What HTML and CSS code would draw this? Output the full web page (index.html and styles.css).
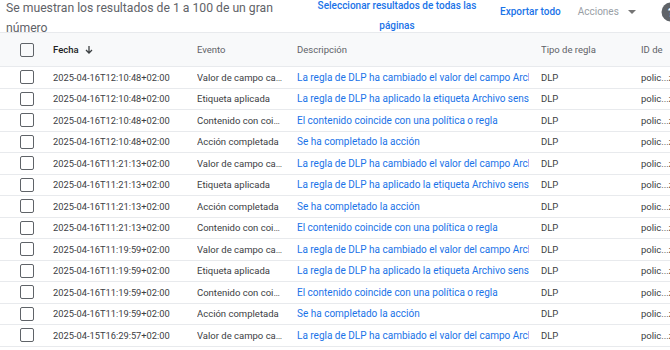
FILE: index.html
```html
<!DOCTYPE html>
<html lang="es">
<head>
<meta charset="utf-8">
<link rel="stylesheet" href="styles.css">
</head>
<body>
<div class="toolbar">
  <div class="summary">Se muestran los resultados de 1 a 100 de un gran número</div>
  <a class="select-all">Seleccionar resultados de todas las páginas</a>
  <a class="export">Exportar todo</a>
  <div class="actions">Acciones <span class="caret"></span></div>
  <div class="help"><svg width="20" height="20" viewBox="0 0 20 20"><circle cx="10" cy="10" r="9.5" fill="#5f6368"/><text x="10" y="14.5" text-anchor="middle" font-family="Roboto, sans-serif" font-size="12.5" font-weight="700" fill="#fff">?</text></svg></div>
</div>
<div class="table">
  <div class="row head">
    <div class="cb-cell"><span class="cb"></span></div>
    <div class="cell sort"><span>Fecha</span><svg class="arrow" width="10" height="10" viewBox="0 0 10 10"><path d="M5 1v7M2 5l3 3 3-3" stroke="#3c4043" stroke-width="1.3" fill="none"/></svg></div>
    <div class="cell"><span>Evento</span></div>
    <div class="cell"><span>Descripción</span></div>
    <div class="cell"><span>Tipo de regla</span></div>
    <div class="cell"><span>ID de</span></div>
  </div>
  <div id="rows"></div>
</div>
<script>
var data = [
 ["2025-04-16T12:10:48+02:00","Valor de campo cambiado","La regla de DLP ha cambiado el valor del campo Archivo"],
 ["2025-04-16T12:10:48+02:00","Etiqueta aplicada","La regla de DLP ha aplicado la etiqueta Archivo sensible"],
 ["2025-04-16T12:10:48+02:00","Contenido con coincidencias","El contenido coincide con una política o regla"],
 ["2025-04-16T12:10:48+02:00","Acción completada","Se ha completado la acción"],
 ["2025-04-16T11:21:13+02:00","Valor de campo cambiado","La regla de DLP ha cambiado el valor del campo Archivo"],
 ["2025-04-16T11:21:13+02:00","Etiqueta aplicada","La regla de DLP ha aplicado la etiqueta Archivo sensible"],
 ["2025-04-16T11:21:13+02:00","Acción completada","Se ha completado la acción"],
 ["2025-04-16T11:21:13+02:00","Contenido con coincidencias","El contenido coincide con una política o regla"],
 ["2025-04-16T11:19:59+02:00","Valor de campo cambiado","La regla de DLP ha cambiado el valor del campo Archivo"],
 ["2025-04-16T11:19:59+02:00","Etiqueta aplicada","La regla de DLP ha aplicado la etiqueta Archivo sensible"],
 ["2025-04-16T11:19:59+02:00","Contenido con coincidencias","El contenido coincide con una política o regla"],
 ["2025-04-16T11:19:59+02:00","Acción completada","Se ha completado la acción"],
 ["2025-04-15T16:29:57+02:00","Valor de campo cambiado","La regla de DLP ha cambiado el valor del campo Archivo"]
];
var html = "";
data.forEach(function(r){
  html += '<div class="row"><div class="cb-cell"><span class="cb"></span></div>' +
    '<div class="cell date"><span>'+r[0]+'</span></div>' +
    '<div class="cell ev"><span>'+r[1]+'</span></div>' +
    '<div class="cell desc"><a>'+r[2]+'</a></div>' +
    '<div class="cell"><span>DLP</span></div>' +
    '<div class="cell id"><span>polic...zz</span></div></div>';
});
document.getElementById("rows").innerHTML = html;
</script>
</body>
</html>
```
FILE: styles.css
```css
* { box-sizing: border-box; }
html, body { margin: 0; padding: 0; background: #fff; overflow: hidden; }
body { font-family: Roboto, "Noto Sans", sans-serif; color: #3c4043; width: 670px; }

.toolbar {
  display: flex;
  align-items: flex-start;
  height: 33px;
  border-bottom: 1px solid #e8eaed;
}
.toolbar > * { flex: none; }
.summary {
  width: 300px;
  padding-left: 6px;
  font-size: 12.2px;
  line-height: 20px;
  margin-top: -2px;
  color: #5f6368;
}
.select-all {
  width: 190px;
  padding-left: 4px;
  text-align: center;
  font-size: 10px;
  line-height: 20px;
  margin-top: -4px;
  color: #1a73e8;
  font-weight: 500;
}
.export {
  margin-left: 10px;
  margin-top: 2px;
  font-size: 10px;
  line-height: 20px;
  color: #1a73e8;
  font-weight: 500;
}
.actions {
  margin-left: 17px;
  margin-top: 2px;
  font-size: 10px;
  line-height: 20px;
  color: #9aa0a6;
  display: flex;
  align-items: center;
}
.caret {
  display: inline-block;
  margin-left: 9px;
  border-left: 4px solid transparent;
  border-right: 4px solid transparent;
  border-top: 4px solid #757575;
}
.help { margin-left: 25px; margin-top: 2px; display: flex; }

.table { width: 670px; overflow: hidden; }
.row {
  display: grid;
  grid-template-columns: 53px 144px 100px 244px 100px 80px;
  height: 21.5px;
  align-items: center;
  border-bottom: 1px solid #e8eaed;
  font-size: 9.5px;
}
.row.head {
  height: 34px;
  background: #f8f9fa;
  color: #5f6368;
}
.cb-cell { padding-left: 20px; display: flex; }
.cb {
  width: 14px;
  height: 14px;
  border: 1.5px solid #5f6368;
  border-radius: 2px;
}
.cell {
  min-width: 0;
  padding-right: 12px;
}
.cell > span, .cell > a {
  display: block;
  white-space: nowrap;
  overflow: hidden;
}
.date { font-size: 9.3px; }
.sort { color: #202124; font-weight: 500; display: flex; align-items: center; }
.arrow { margin-left: 5px; flex: none; }
.ev > span { text-overflow: ellipsis; }
.ev { padding-right: 14px; }
.desc a { color: #1a73e8; font-size: 10px; }
.desc { padding-right: 12px; }
```
